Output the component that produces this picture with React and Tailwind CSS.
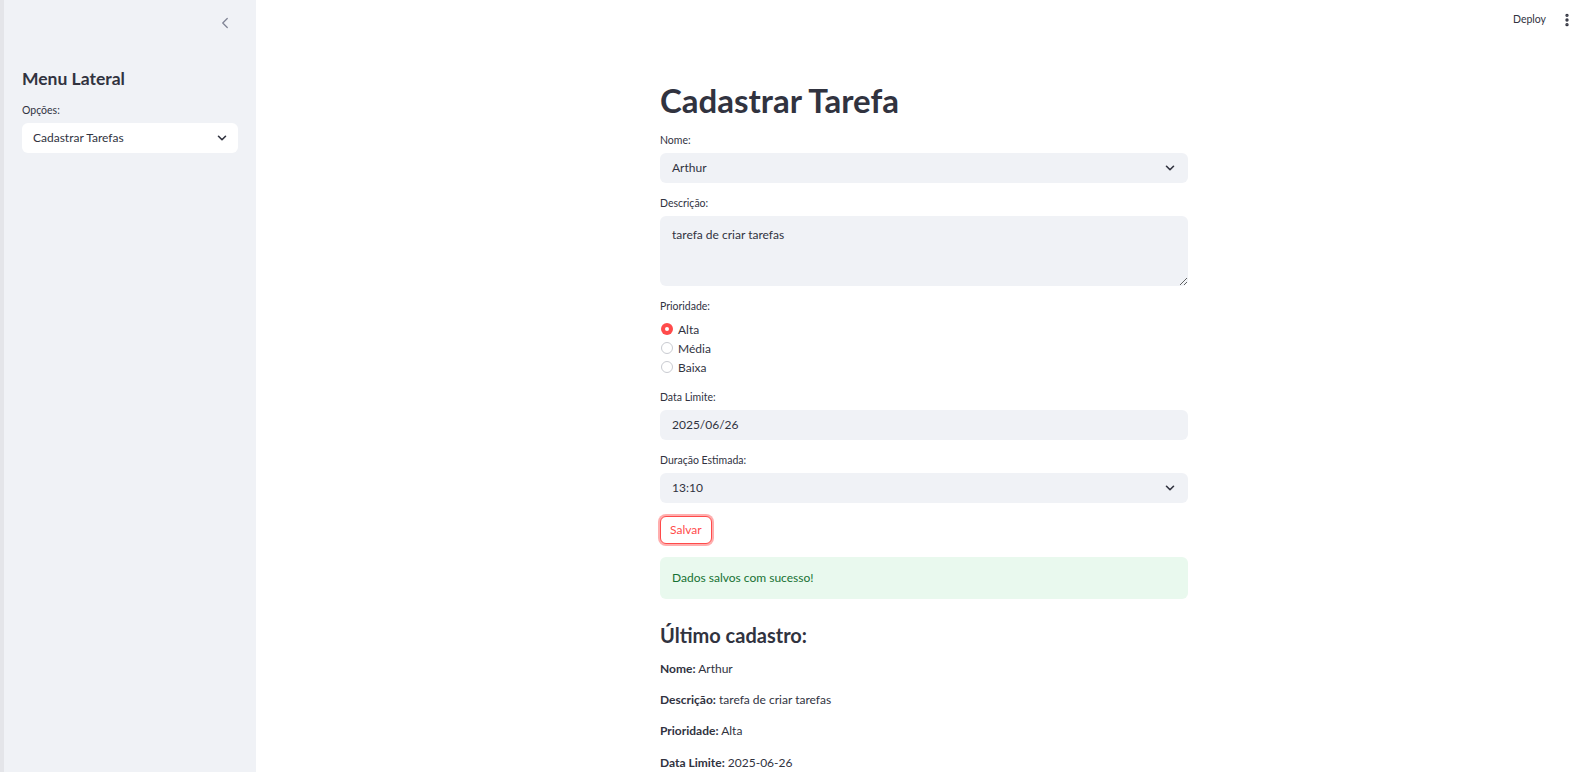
import React from "react";
import { ChevronLeft, ChevronDown, EllipsisVertical } from "lucide-react";

function Label({ children, className = "" }) {
  return (
    <div className={`h-4 text-[10.5px] leading-4 text-[#31333f] ${className}`}>
      {children}
    </div>
  );
}

function SelectBox({ value, light }) {
  return (
    <div
      className={
        light
          ? "flex h-[30px] items-center justify-between rounded-[6px] bg-white pl-[11px] pr-[9px] text-[12px]"
          : "flex h-[30px] items-center justify-between rounded-[6px] bg-[#f0f2f6] pl-3 pr-[11px] text-[12px]"
      }>
      <span>{value}</span>
      <ChevronDown size={14} strokeWidth={2.75} className="text-[#31333f]" />
    </div>
  );
}

function Radio({ label, checked }) {
  return (
    <div className="flex h-[19.2px] items-center">
      {checked ? (
        <span className="ml-px flex h-3 w-3 items-center justify-center rounded-full bg-[#ff4b4b]">
          <span className="h-1 w-1 rounded-full bg-white" />
        </span>
      ) : (
        <span className="ml-px h-3 w-3 rounded-full border border-[#c9cbd1] bg-white" />
      )}
      <span className="ml-[5px] text-[12px] leading-[19.2px]">{label}</span>
    </div>
  );
}

export default function App() {
  const ultimo = [
    ["Nome:", "Arthur"],
    ["Descrição:", "tarefa de criar tarefas"],
    ["Prioridade:", "Alta"],
    ["Data Limite:", "2025-06-26"],
  ];

  return (
    <div className="flex h-screen w-full overflow-hidden bg-white font-[Lato,sans-serif] text-[#31333f]">
      {/* sidebar */}
      <aside className="w-[256px] shrink-0 border-l-4 border-[#e4e5e9] bg-[#f0f2f6] pl-[18px] pr-[18px]">
        <div className="flex h-[46px] items-center justify-end pr-[4px]">
          <ChevronLeft size={18} strokeWidth={1.75} className="text-[#808495]" />
        </div>
        <h2 className="mt-[21px] text-[17.5px] font-bold leading-[23px]">
          Menu Lateral
        </h2>
        <Label className="mt-3 mb-[5px]">Opções:</Label>
        <SelectBox value="Cadastrar Tarefas" light />
      </aside>

      {/* main */}
      <main className="flex min-w-0 flex-1 flex-col">
        <div className="flex h-[39px] shrink-0 items-center justify-end">
          <span className="mr-[13px] text-[10.5px]">Deploy</span>
          <span className="flex w-4 items-center justify-center">
            <EllipsisVertical size={16} strokeWidth={3} className="text-[#31333f]" />
          </span>
        </div>

        <div className="flex justify-center pl-[17px]">
          <div className="flex w-[528px] flex-col gap-3 pt-[40.5px]">
            <h1 className="text-[33px] font-bold leading-[40px]">
              Cadastrar Tarefa
            </h1>

            <div>
              <Label className="mb-[5px]">Nome:</Label>
              <SelectBox value="Arthur" />
            </div>

            <div>
              <Label className="mb-[5px]">Descrição:</Label>
              <textarea
                readOnly
                defaultValue="tarefa de criar tarefas"
                className="block h-[70px] w-full resize-y rounded-[6px] bg-[#f0f2f6] px-3 pt-[9px] text-[12px] leading-[19.2px] outline-none"
              />
            </div>

            <div>
              <Label className="mb-[6px]">Prioridade:</Label>
              <Radio label="Alta" checked />
              <Radio label="Média" />
              <Radio label="Baixa" />
            </div>

            <div>
              <Label className="mb-[5px]">Data Limite:</Label>
              <div className="flex h-[30px] items-center rounded-[6px] bg-[#f0f2f6] px-3 text-[12px]">
                2025/06/26
              </div>
            </div>

            <div>
              <Label className="mb-[5px]">Duração Estimada:</Label>
              <SelectBox value="13:10" />
            </div>

            <div className="h-[30px] pt-[1px]">
              <button className="h-[28px] rounded-[6px] border border-[#ff4b4b] bg-white px-[9px] text-[12px] text-[#ff4b4b] shadow-[0_0_0_2px_rgba(255,75,75,0.45)]">
                Salvar
              </button>
            </div>

            <div className="rounded-[6px] bg-[#e9f9ee] px-3 py-3 text-[12px] leading-[18px] text-[#177233]">
              Dados salvos com sucesso!
            </div>

            <h3 className="mt-3 text-[20px] font-bold leading-[24px]">
              Último cadastro:
            </h3>

            {ultimo.map(([k, v]) => (
              <p key={k} className="text-[12px] leading-[19.2px]">
                <span className="font-bold">{k}</span> {v}
              </p>
            ))}
          </div>
        </div>
      </main>
    </div>
  );
}
